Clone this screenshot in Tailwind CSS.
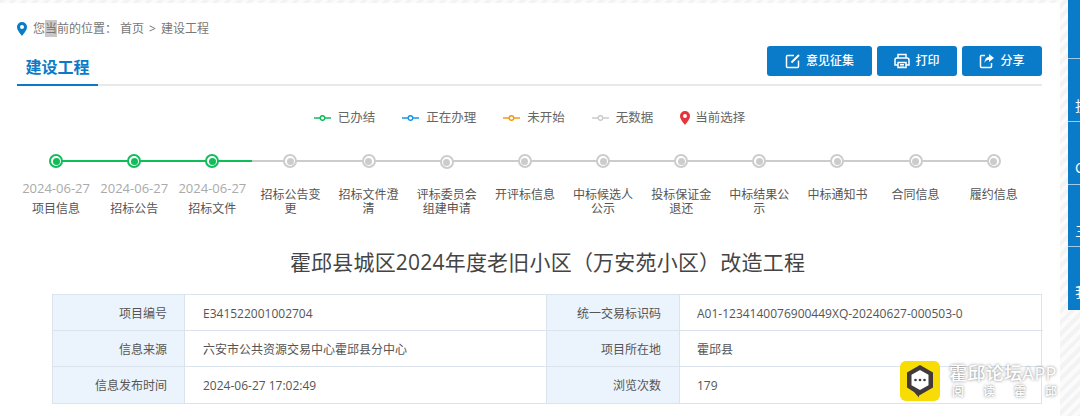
<!DOCTYPE html>
<html lang="zh-CN">
<head>
<meta charset="utf-8">
<title>建设工程</title>
<script src="https://cdn.jsdelivr.net/npm/@tailwindcss/browser@4"></script>
</head>
<body class="m-0 overflow-hidden">
<div class="relative flex h-[416px] w-[1080px] overflow-hidden bg-[repeating-linear-gradient(135deg,#f3f3f3_0,#f3f3f3_4px,#fbfbfb_4px,#fbfbfb_8px)] font-['Open_Sans','Noto_Sans_CJK_SC',sans-serif] text-[12px] text-[#555]">

  <!-- main panel -->
  <main class="mt-[3px] w-[1060px] bg-white pl-[17px] pr-[18px]">

    <div class="flex h-[50px] items-center pt-[2px]">
      <svg class="h-[14px] w-[10px] text-[#0a7bc8]" viewBox="0 0 10 14"><path fill="currentColor" fill-rule="evenodd" d="M5 0a5 5 0 0 1 5 5c0 3.200-3.200 6.600-5 9-1.800-2.400-5-5.800-5-9a5 5 0 0 1 5-5zm0 3a2 2 0 1 0 0 4 2 2 0 0 0 0-4z"/></svg>
      <span class="ml-[6px] text-[#777]">您<span class="bg-[#c8c8c8]">当</span>前的位置：</span>
      <span class="ml-[3px] text-[#777]">首页</span>
      <span class="ml-[5px] text-[#777]">&gt;</span>
      <span class="ml-[5px] text-[#777]">建设工程</span>
    </div>

    <div class="flex h-[33px] items-start justify-between border-b-2 border-[#e9e9e9]">
      <h1 class="-mb-[2px] flex h-[33px] w-[81px] items-center justify-center border-b-2 border-[#0a7bc8] pb-[3px] text-[16px] font-bold text-[#0a7bc8]">建设工程</h1>
      <div class="-mt-[7px] flex gap-[5px] font-medium text-white">
        <button class="flex h-[30px] w-[105px] items-center justify-center gap-[5px] rounded-[3px] bg-[#0a7bc8]">
          <svg class="h-[16px] w-[16px]" viewBox="0 0 16 16" fill="none" stroke="currentColor" stroke-width="1.500"><path d="M9 2.500H2.500a1 1 0 0 0-1 1v10a1 1 0 0 0 1 1h10a1 1 0 0 0 1-1V7.500"/><path stroke-width="2" d="M6.500 9.500 14 2"/></svg>
          <span>意见征集</span>
        </button>
        <button class="flex h-[30px] w-[80px] items-center justify-center gap-[5px] rounded-[3px] bg-[#0a7bc8]">
          <svg class="h-[16px] w-[16px]" viewBox="0 0 16 16" fill="none" stroke="currentColor" stroke-width="1.500"><path d="M4 5V1.500h8V5"/><path d="M4 12H1v-5a2 2 0 0 1 2-2h10a2 2 0 0 1 2 2v5h-3"/><path d="M4 9.500h8v5H4z"/><path stroke-width="1" d="M6 11.500h4M6 13h4"/></svg>
          <span>打印</span>
        </button>
        <button class="flex h-[30px] w-[80px] items-center justify-center gap-[5px] rounded-[3px] bg-[#0a7bc8]">
          <svg class="h-[16px] w-[16px]" viewBox="0 0 16 16" fill="none" stroke="currentColor" stroke-width="1.500"><path d="M6 2.500H2.500a1 1 0 0 0-1 1v10a1 1 0 0 0 1 1h9a1 1 0 0 0 1-1V10"/><path fill="currentColor" stroke="none" d="M10 1l5 4-5 4V6.700C8 6.700 6.500 7.500 5.500 10c0-3.800 1.800-6 4.500-6.300z"/></svg>
          <span>分享</span>
        </button>
      </div>
    </div>

    <!-- legend -->
    <ul class="mt-[23px] flex h-[18px] items-center justify-center gap-[27px] text-[12.5px] text-[#666]">
      <li class="flex items-center gap-[7px]">
        <svg class="h-[6px] w-[17px] text-[#10bd59]" viewBox="0 0 17 6" fill="none" stroke="currentColor" stroke-width="1.500"><path d="M0 3h6M11 3h6"/><circle cx="8.500" cy="3" r="2.300"/></svg>已办结
      </li>
      <li class="flex items-center gap-[7px]">
        <svg class="h-[6px] w-[17px] text-[#1b96e8]" viewBox="0 0 17 6" fill="none" stroke="currentColor" stroke-width="1.500"><path d="M0 3h6M11 3h6"/><circle cx="8.500" cy="3" r="2.300"/></svg>正在办理
      </li>
      <li class="flex items-center gap-[7px]">
        <svg class="h-[6px] w-[17px] text-[#f39c12]" viewBox="0 0 17 6" fill="none" stroke="currentColor" stroke-width="1.500"><path d="M0 3h6M11 3h6"/><circle cx="8.500" cy="3" r="2.300"/></svg>未开始
      </li>
      <li class="flex items-center gap-[7px]">
        <svg class="h-[6px] w-[17px] text-[#cccccc]" viewBox="0 0 17 6" fill="none" stroke="currentColor" stroke-width="1.500"><path d="M0 3h6M11 3h6"/><circle cx="8.500" cy="3" r="2.300"/></svg>无数据
      </li>
      <li class="flex items-center gap-[5px]">
        <svg class="h-[14px] w-[10px] text-[#e8323c]" viewBox="0 0 10 14"><path fill="currentColor" fill-rule="evenodd" d="M5 0a5 5 0 0 1 5 5c0 3.200-3.200 6.600-5 9-1.800-2.400-5-5.800-5-9a5 5 0 0 1 5-5zm0 3a2 2 0 1 0 0 4 2 2 0 0 0 0-4z"/></svg>当前选择
      </li>
    </ul>

    <!-- timeline -->
    <ol class="mt-[27px] grid h-[70px] grid-cols-[repeat(13,78.15px)] text-center leading-[14px] text-[#555]">
      <li class="relative flex flex-col items-center">
        <span class="absolute left-1/2 top-[6px] h-[2px] w-[78.15px] bg-[#10bd59]"></span>
        <span class="relative z-10 flex h-[14px] w-[14px] items-center justify-center rounded-full border-2 border-[#10bd59] bg-white"><span class="h-[7px] w-[7px] rounded-full bg-[#10bd59]"></span></span>
        <span class="mt-[13px] whitespace-nowrap text-[13px] text-[#aaa]">2024-06-27</span>
        <span class="mt-[7px]">项目信息</span>
      </li>
      <li class="relative flex flex-col items-center">
        <span class="absolute left-1/2 top-[6px] h-[2px] w-[78.15px] bg-[#10bd59]"></span>
        <span class="relative z-10 flex h-[14px] w-[14px] items-center justify-center rounded-full border-2 border-[#10bd59] bg-white"><span class="h-[7px] w-[7px] rounded-full bg-[#10bd59]"></span></span>
        <span class="mt-[13px] whitespace-nowrap text-[13px] text-[#aaa]">2024-06-27</span>
        <span class="mt-[7px]">招标公告</span>
      </li>
      <li class="relative flex flex-col items-center">
        <span class="absolute left-1/2 top-[6px] h-[2px] w-[40px] bg-[#10bd59]"></span>
        <span class="absolute left-[79px] top-[6px] h-[2px] w-[38px] bg-[#cccccc]"></span>
        <span class="relative z-10 flex h-[14px] w-[14px] items-center justify-center rounded-full border-2 border-[#10bd59] bg-white"><span class="h-[7px] w-[7px] rounded-full bg-[#10bd59]"></span></span>
        <span class="mt-[13px] whitespace-nowrap text-[13px] text-[#aaa]">2024-06-27</span>
        <span class="mt-[7px]">招标文件</span>
      </li>
      <li class="relative flex flex-col items-center">
        <span class="absolute left-1/2 top-[6px] h-[2px] w-[78.15px] bg-[#cccccc]"></span>
        <span class="relative z-10 flex h-[14px] w-[14px] items-center justify-center rounded-full border-2 border-[#cccccc] bg-white"><span class="h-[7px] w-[7px] rounded-full bg-[#cccccc]"></span></span>
        <span class="mt-[20px] w-[66px]">招标公告变更</span>
      </li>
      <li class="relative flex flex-col items-center">
        <span class="absolute left-1/2 top-[6px] h-[2px] w-[78.15px] bg-[#cccccc]"></span>
        <span class="relative z-10 flex h-[14px] w-[14px] items-center justify-center rounded-full border-2 border-[#cccccc] bg-white"><span class="h-[7px] w-[7px] rounded-full bg-[#cccccc]"></span></span>
        <span class="mt-[20px] w-[66px]">招标文件澄清</span>
      </li>
      <li class="relative flex flex-col items-center">
        <span class="absolute left-1/2 top-[6px] h-[2px] w-[78.15px] bg-[#cccccc]"></span>
        <span class="relative z-10 mt-px flex h-[14px] w-[14px] items-center justify-center rounded-full border-2 border-[#cccccc] bg-white"><span class="h-[7px] w-[7px] rounded-full bg-[#cccccc]"></span></span>
        <span class="mt-[19px] w-[66px]">评标委员会组建申请</span>
      </li>
      <li class="relative flex flex-col items-center">
        <span class="absolute left-1/2 top-[6px] h-[2px] w-[78.15px] bg-[#cccccc]"></span>
        <span class="relative z-10 flex h-[14px] w-[14px] items-center justify-center rounded-full border-2 border-[#cccccc] bg-white"><span class="h-[7px] w-[7px] rounded-full bg-[#cccccc]"></span></span>
        <span class="mt-[20px] w-[66px]">开评标信息</span>
      </li>
      <li class="relative flex flex-col items-center">
        <span class="absolute left-1/2 top-[6px] h-[2px] w-[78.15px] bg-[#cccccc]"></span>
        <span class="relative z-10 flex h-[14px] w-[14px] items-center justify-center rounded-full border-2 border-[#cccccc] bg-white"><span class="h-[7px] w-[7px] rounded-full bg-[#cccccc]"></span></span>
        <span class="mt-[20px] w-[66px]">中标候选人公示</span>
      </li>
      <li class="relative flex flex-col items-center">
        <span class="absolute left-1/2 top-[6px] h-[2px] w-[78.15px] bg-[#cccccc]"></span>
        <span class="relative z-10 flex h-[14px] w-[14px] items-center justify-center rounded-full border-2 border-[#cccccc] bg-white"><span class="h-[7px] w-[7px] rounded-full bg-[#cccccc]"></span></span>
        <span class="mt-[20px] w-[66px]">投标保证金退还</span>
      </li>
      <li class="relative flex flex-col items-center">
        <span class="absolute left-1/2 top-[6px] h-[2px] w-[78.15px] bg-[#cccccc]"></span>
        <span class="relative z-10 flex h-[14px] w-[14px] items-center justify-center rounded-full border-2 border-[#cccccc] bg-white"><span class="h-[7px] w-[7px] rounded-full bg-[#cccccc]"></span></span>
        <span class="mt-[20px] w-[66px]">中标结果公示</span>
      </li>
      <li class="relative flex flex-col items-center">
        <span class="absolute left-1/2 top-[6px] h-[2px] w-[78.15px] bg-[#cccccc]"></span>
        <span class="relative z-10 flex h-[14px] w-[14px] items-center justify-center rounded-full border-2 border-[#cccccc] bg-white"><span class="h-[7px] w-[7px] rounded-full bg-[#cccccc]"></span></span>
        <span class="mt-[20px] w-[66px]">中标通知书</span>
      </li>
      <li class="relative flex flex-col items-center">
        <span class="absolute left-1/2 top-[6px] h-[2px] w-[78.15px] bg-[#cccccc]"></span>
        <span class="relative z-10 flex h-[14px] w-[14px] items-center justify-center rounded-full border-2 border-[#cccccc] bg-white"><span class="h-[7px] w-[7px] rounded-full bg-[#cccccc]"></span></span>
        <span class="mt-[20px] w-[66px]">合同信息</span>
      </li>
      <li class="relative flex flex-col items-center">
        <span class="relative z-10 flex h-[14px] w-[14px] items-center justify-center rounded-full border-2 border-[#cccccc] bg-white"><span class="h-[7px] w-[7px] rounded-full bg-[#cccccc]"></span></span>
        <span class="mt-[20px] w-[66px]">履约信息</span>
      </li>
    </ol>

    <h2 class="mt-[23px] pl-[36px] text-center text-[21px] leading-[30px] tracking-[0.2px] text-[#444]">霍邱县城区2024年度老旧小区（万安苑小区）改造工程</h2>

    <!-- info table -->
    <div class="ml-[35px] mt-[17px] grid h-[110px] w-[990px] grid-cols-[132px_362px_133px_363px] grid-rows-3 border border-[#dbe3ec] [&>div]:pt-[2px]">
      <div class="flex items-center justify-end border-r border-b border-[#dbe3ec] bg-[#ebf3fc] pr-[17px]">项目编号</div>
      <div class="flex items-center border-r border-b border-[#dbe3ec] pl-[18px]">E341522001002704</div>
      <div class="flex items-center justify-end border-r border-b border-[#dbe3ec] bg-[#ebf3fc] pr-[18px]">统一交易标识码</div>
      <div class="flex items-center border-b border-[#dbe3ec] pl-[17px]">A01-1234140076900449XQ-20240627-000503-0</div>
      <div class="flex items-center justify-end border-r border-b border-[#dbe3ec] bg-[#ebf3fc] pr-[17px]">信息来源</div>
      <div class="flex items-center border-r border-b border-[#dbe3ec] pl-[18px]">六安市公共资源交易中心霍邱县分中心</div>
      <div class="flex items-center justify-end border-r border-b border-[#dbe3ec] bg-[#ebf3fc] pr-[18px]">项目所在地</div>
      <div class="flex items-center border-b border-[#dbe3ec] pl-[17px]">霍邱县</div>
      <div class="flex items-center justify-end border-r border-[#dbe3ec] bg-[#ebf3fc] pr-[17px]">信息发布时间</div>
      <div class="flex items-center border-r border-[#dbe3ec] pl-[18px]">2024-06-27 17:02:49</div>
      <div class="flex items-center justify-end border-r border-[#dbe3ec] bg-[#ebf3fc] pr-[18px]">浏览次数</div>
      <div class="flex items-center pl-[17px]">179</div>
    </div>
  </main>

  <!-- right side rail, cut off by the window -->
  <aside class="ml-[8px] flex h-[310px] w-[12px] flex-col overflow-hidden bg-[#0a7bc8] text-[14px] leading-[16px] text-white">
    <div class="h-[59px] border-b border-white/60"></div>
    <div class="flex h-[63px] items-end whitespace-nowrap border-b border-white/60 pb-[7px] pl-[7px]">投诉</div>
    <div class="flex h-[63px] items-end whitespace-nowrap border-b border-white/60 pb-[8px] pl-[7px]">C</div>
    <div class="flex h-[62px] items-end whitespace-nowrap border-b border-white/60 pb-[7px] pl-[7px]">三</div>
    <div class="flex h-[63px] items-end whitespace-nowrap pb-[10px] pl-[7px]">我</div>
  </aside>

  <!-- watermark over the page -->
  <div class="absolute left-[900px] top-[361px] flex">
    <div class="flex h-[40px] w-[40px] items-center justify-center rounded-[6px] bg-[#f7dc06]">
      <svg class="h-[34px] w-[30px]" viewBox="0 0 30 34"><path fill="#423a3a" d="M15 1l13 7.500v15L15 31l-1 .5v2l-5-5.500-7-4.500v-15z"/><path fill="#fff" d="M15 6l8.500 4.700v10.600L15 26l-8.500-4.700V10.700z"/><circle cx="10.500" cy="16" r="1.300" fill="#423a3a"/><circle cx="15" cy="16" r="1.300" fill="#423a3a"/><circle cx="19.500" cy="16" r="1.300" fill="#423a3a"/></svg>
    </div>
    <div class="ml-[9px] flex w-[111px] flex-col font-medium text-white [text-shadow:0_0_3px_#777]">
      <span class="mt-[1px] whitespace-nowrap text-[18px] leading-[22px] tracking-[0.4px]">霍邱论坛APP</span>
      <span class="mt-[1px] flex justify-between px-[3px] text-[12px] leading-[14px]"><span>阅</span><span>读</span><span>霍</span><span>邱</span></span>
    </div>
  </div>
</div>
</body>
</html>
